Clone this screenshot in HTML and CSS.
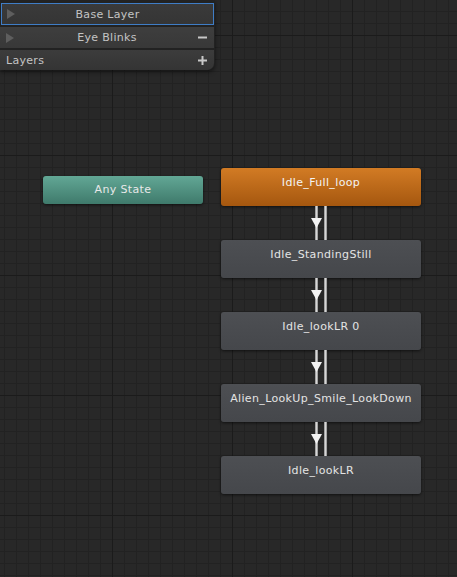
FILE: index.html
```html
<!DOCTYPE html>
<html>
<head>
<meta charset="utf-8">
<link rel="stylesheet" href="styles.css">
</head>
<body>
<div class="graph">
  <div class="layers">
    <div class="row row-base">
      <svg class="play" width="8" height="10" viewBox="0 0 8 10"><path d="M0 0 L8 5 L0 10 Z" fill="#5e5e5e"/></svg>
      <span class="row-label">Base Layer</span>
    </div>
    <div class="row">
      <svg class="play" width="8" height="10" viewBox="0 0 8 10"><path d="M0 0 L8 5 L0 10 Z" fill="#5e5e5e"/></svg>
      <span class="row-label">Eye Blinks</span>
      <svg class="ctl" width="9" height="9" viewBox="0 0 9 9"><rect x="0" y="3.5" width="9" height="2" fill="#c8c8c8"/></svg>
    </div>
    <div class="row row-head">
      <span class="head-label">Layers</span>
      <svg class="ctl" width="9" height="9" viewBox="0 0 9 9"><rect x="0" y="3.5" width="9" height="2" fill="#c8c8c8"/><rect x="3.5" y="0" width="2" height="9" fill="#c8c8c8"/></svg>
    </div>
  </div>

  <div class="node any" style="left:43px;top:176px">Any State</div>

  <div class="chain">
    <div class="node state entry">Idle_Full_loop</div>
    <div class="link"><span class="wire"></span><span class="wire"></span><svg class="arrow" width="11" height="10" viewBox="0 0 11 10"><path d="M0 0 L11 0 L5.5 10 Z" fill="#f2f2f2"/></svg></div>
    <div class="node state">Idle_StandingStill</div>
    <div class="link"><span class="wire"></span><span class="wire"></span><svg class="arrow" width="11" height="10" viewBox="0 0 11 10"><path d="M0 0 L11 0 L5.5 10 Z" fill="#f2f2f2"/></svg></div>
    <div class="node state">Idle_lookLR 0</div>
    <div class="link"><span class="wire"></span><span class="wire"></span><svg class="arrow" width="11" height="10" viewBox="0 0 11 10"><path d="M0 0 L11 0 L5.5 10 Z" fill="#f2f2f2"/></svg></div>
    <div class="node state">Alien_LookUp_Smile_LookDown</div>
    <div class="link"><span class="wire"></span><span class="wire"></span><svg class="arrow" width="11" height="10" viewBox="0 0 11 10"><path d="M0 0 L11 0 L5.5 10 Z" fill="#f2f2f2"/></svg></div>
    <div class="node state">Idle_lookLR</div>
  </div>
</div>
</body>
</html>
```
FILE: styles.css
```css
html, body {
  margin: 0;
  padding: 0;
}
body {
  width: 457px;
  height: 577px;
  overflow: hidden;
  background: #282828;
  font-family: "DejaVu Sans", "Liberation Sans", sans-serif;
  font-size: 11px;
}
.graph {
  position: relative;
  width: 457px;
  height: 577px;
  background-color: #282828;
  background-image:
    linear-gradient(to right, #1b1b1b 1px, transparent 1px),
    linear-gradient(to bottom, #1b1b1b 1px, transparent 1px),
    linear-gradient(to right, #222222 1px, transparent 1px),
    linear-gradient(to bottom, #222222 1px, transparent 1px);
  background-size: 120px 120px, 120px 120px, 12px 12px, 12px 12px;
  background-position: 112px 0, 0 35px, 4px 0, 0 11px;
}
.layers {
  position: absolute;
  left: 0;
  top: 0;
  width: 215px;
  padding-top: 3px;
  display: flex;
  flex-direction: column;
  gap: 2px;
  background: #222;
  border-bottom-right-radius: 7px;
  box-shadow: 0 2px 4px rgba(0,0,0,0.5);
}
.row {
  position: relative;
  height: 21px;
  display: flex;
  align-items: center;
  justify-content: center;
  background: linear-gradient(#3e3e3e, #383838);
  color: #c4c4c4;
  margin: 0 1px 0 0;
}
.row-base {
  height: 20px;
  border: 1px solid #3f7dc6;
  margin: 0 1px 0 1px;
  background: linear-gradient(#3a3a3a, #353535);
}
.play {
  position: absolute;
  left: 6px;
  top: 6px;
}
.row-base .play {
  left: 5px;
  top: 5px;
}
.row-label {
  letter-spacing: 0.3px;
}
.ctl {
  position: absolute;
  right: 7px;
  top: 6px;
}
.row-head {
  height: 20px;
  justify-content: flex-start;
  padding-left: 6px;
  border-bottom-right-radius: 7px;
  background: linear-gradient(#3c3c3c, #343434);
}
.head-label {
  letter-spacing: 0.3px;
}
.node {
  box-sizing: border-box;
  text-align: center;
  color: #e4e4e4;
  border-radius: 3px;
  letter-spacing: 0.35px;
  box-shadow: 0 1px 3px rgba(0,0,0,0.6);
}
.any {
  position: absolute;
  width: 160px;
  height: 28px;
  line-height: 28px;
  background: linear-gradient(#62a795, #3f7a6b);
  color: #e8e8e8;
}
.chain {
  position: absolute;
  left: 221px;
  top: 168px;
  width: 200px;
  display: flex;
  flex-direction: column;
}
.state {
  height: 38px;
  padding-top: 8px;
  line-height: 14px;
  background: linear-gradient(#4d4f53, #45474b);
}
.entry {
  background: linear-gradient(#d27b24, #a5570f);
  color: #f4f4f4;
}
.link {
  position: relative;
  height: 34px;
}
.wire {
  position: absolute;
  top: 0;
  bottom: 0;
  width: 3px;
  background: linear-gradient(to right, #8a8a8a, #d6d6d6 50%, #8a8a8a);
}
.wire:first-child {
  left: 94px;
}
.wire:nth-child(2) {
  left: 103px;
}
.arrow {
  position: absolute;
  left: 90px;
  top: 12px;
}
```
